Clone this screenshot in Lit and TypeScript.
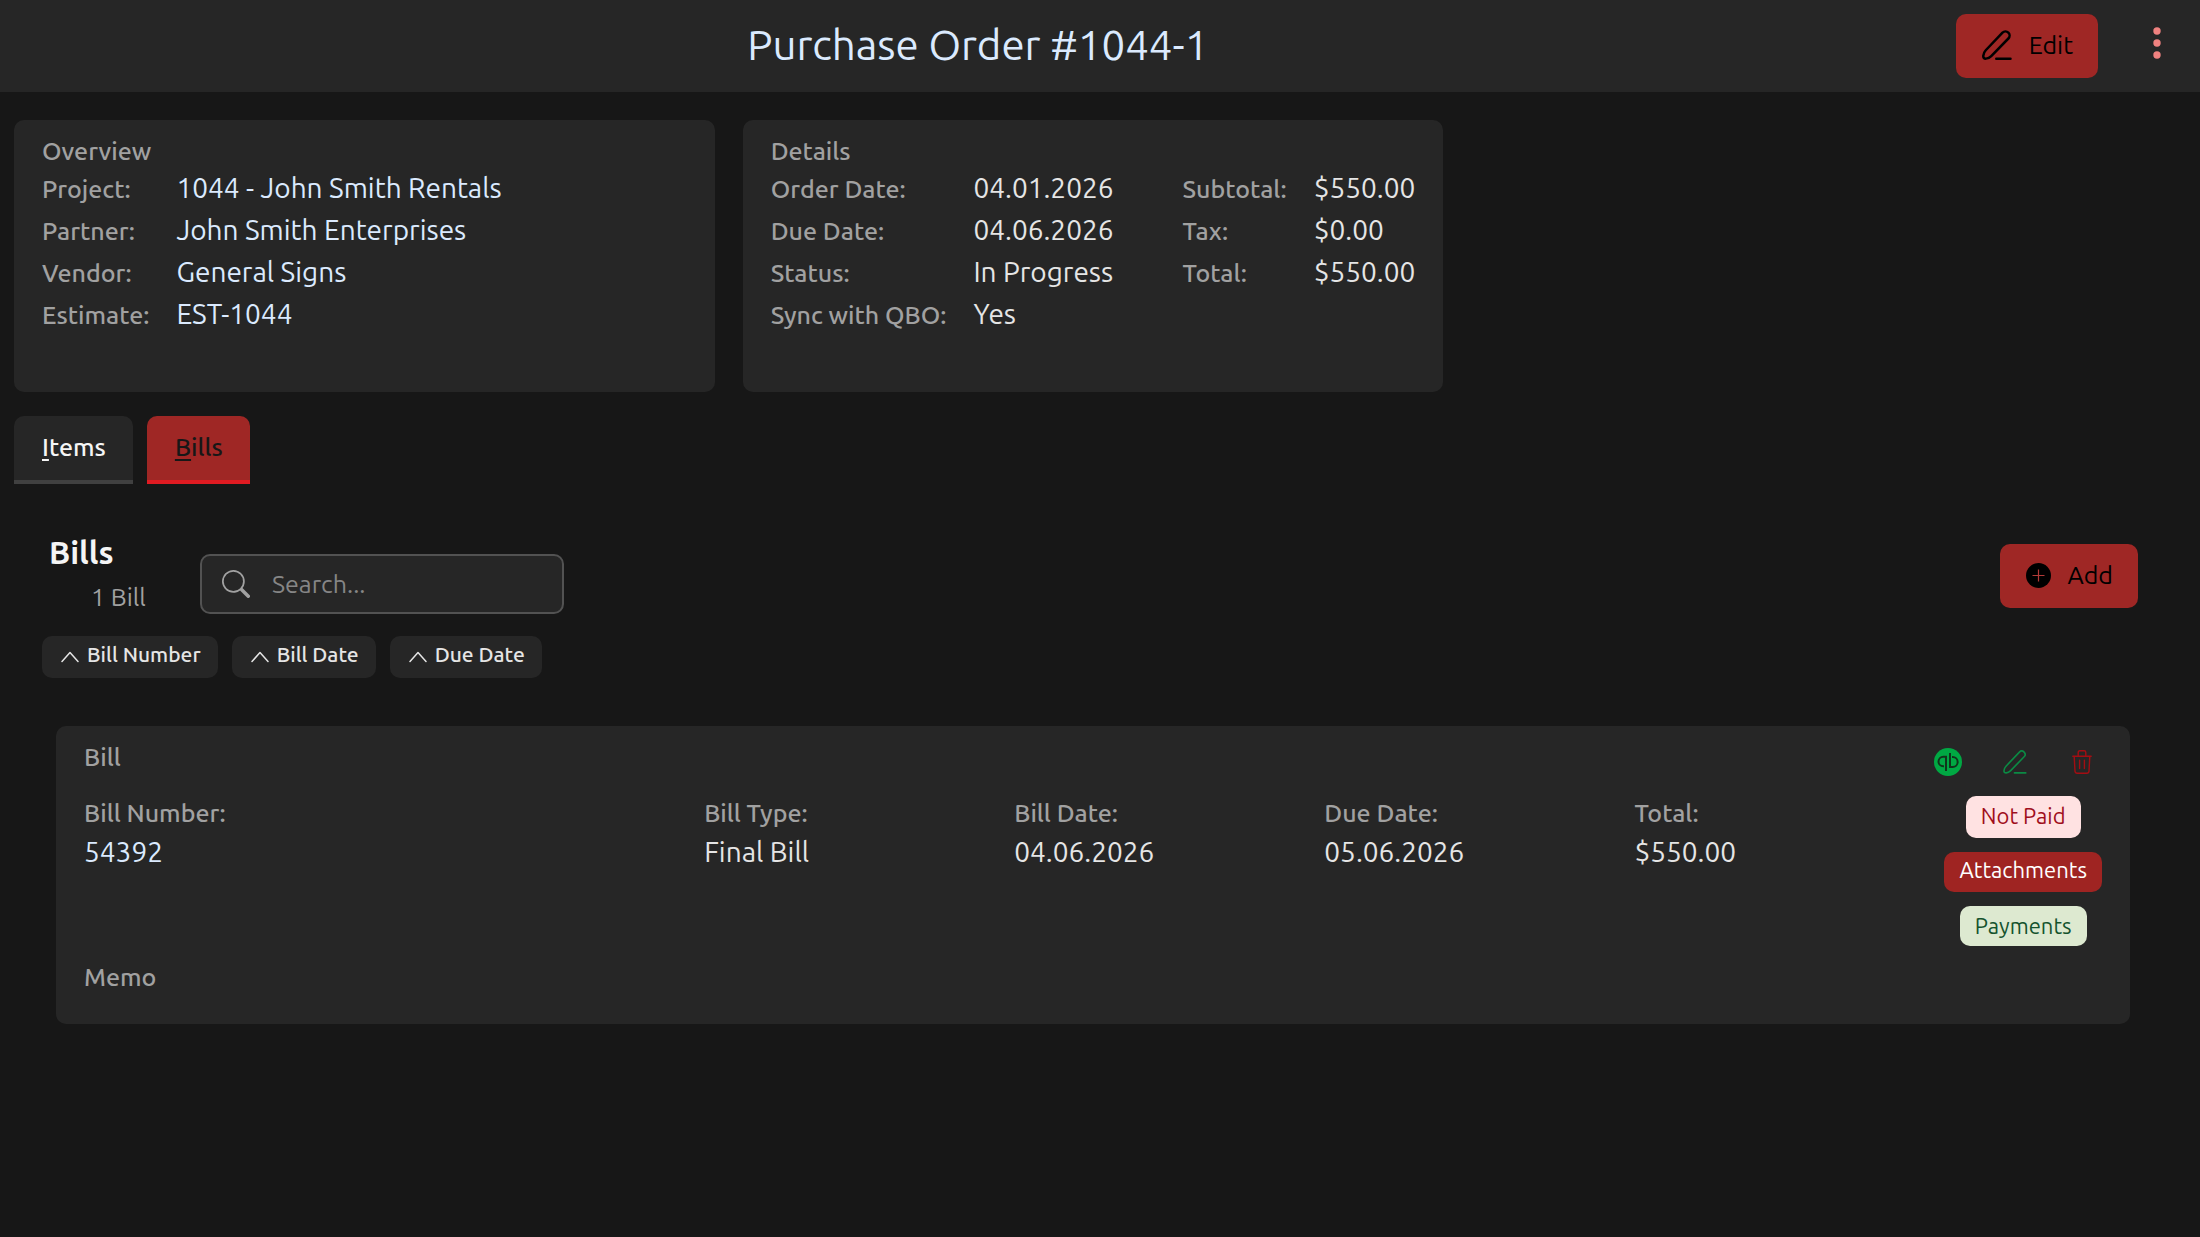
import { LitElement, html, svg, css, nothing } from "lit";
import { customElement, property, state } from "lit/decorators.js";
import { classMap } from "lit/directives/class-map.js";

interface Field {
  label: string;
  value: string;
  href?: string;
}

const pencil = html`<svg class="pencil" viewBox="0 0 24 24" fill="none" stroke="currentColor" stroke-linecap="round" stroke-linejoin="round" aria-hidden="true">
  <path d="M16.4 2.1a3.3 3.3 0 0 1 4.7 4.7L7.4 20.9Q5.5 22.8 3.2 22.9Q.9 23 1 20.7Q1.2 18.1 3 16.2Z" />
  <path d="M11.4 22.9H22.8" />
</svg>`;

const trash = html`<svg class="trash" viewBox="0 0 20 24" fill="none" stroke="currentColor" stroke-linecap="round" stroke-linejoin="round" aria-hidden="true">
  <path d="M.8 6.2H19.2M6.2 6V2.4Q6.2 .8 7.8 .8H12.2Q13.8 .8 13.8 2.4V6M2.2 6.4L3 21.4Q3.1 23.2 4.9 23.2H15.1Q16.9 23.2 17 21.4L17.8 6.4M7.6 10.2V18.6M12.4 10.2V18.6" />
</svg>`;

const quickBooks = html`<svg class="qb" viewBox="0 0 84 84" fill="none" aria-hidden="true">
  <circle cx="42" cy="42" r="42" fill="#00a843" />
  <path d="M36 26H28A14 14 0 0 0 28 55H30M36 23V69" stroke="#10351c" stroke-width="6" />
  <path d="M48 57H56A14 14 0 0 0 56 27H54M48 15V60" stroke="#10351c" stroke-width="6" />
</svg>`;

const plus = html`<svg class="plus" viewBox="0 0 25 25" aria-hidden="true">
  <circle cx="12.5" cy="12.5" r="12.5" fill="#000" />
  <path d="M12.5 6.5V18.5M6.5 12.5H18.5" stroke="#b23a38" stroke-width="1.2" />
</svg>`;

const magnifier = html`<svg class="magnifier" viewBox="0 0 16 16" fill="currentColor" aria-hidden="true">
  <path d="M11.742 10.344a6.5 6.5 0 1 0-1.397 1.398h-.001c.03.04.062.078.098.115l3.85 3.85a1 1 0 0 0 1.415-1.414l-3.85-3.85a1.007 1.007 0 0 0-.115-.1zM12 6.5a5.5 5.5 0 1 1-11 0 5.5 5.5 0 0 1 11 0" />
</svg>`;

const chevron = html`<svg class="chevron" viewBox="0 0 18 12" fill="none" stroke="currentColor" stroke-linecap="round" stroke-linejoin="round" aria-hidden="true">
  <path d="M1 10.5L9 1.5L17 10.5" />
</svg>`;

const dots = html`<svg class="dots" viewBox="0 0 8 38" fill="currentColor" aria-hidden="true">
  ${[4, 16, 28].map((y) => svg`<circle cx="4" cy=${y} r="3.7" />`)}
</svg>`;

@customElement("field-list")
export class FieldList extends LitElement {
  static styles = css`
    dl {
      display: grid;
      grid-template-columns: auto auto;
      justify-content: start;
      align-items: baseline;
      grid-auto-rows: 42px;
      column-gap: 27px;
      margin: 0;
      line-height: 40px;
      white-space: nowrap;
    }
    dt {
      font-size: 25px;
      font-weight: 500;
      color: #a1a1a1;
    }
    dd {
      margin: 0;
      font-size: 28px;
    }
    a {
      color: #dbeafe;
      text-decoration: none;
    }
  `;

  @property({ attribute: false }) fields: Field[] = [];

  render() {
    return html`<dl>
      ${this.fields.map(
        (f) => html`<dt>${f.label}:</dt>
          <dd>${f.href ? html`<a href=${f.href}>${f.value}</a>` : f.value}</dd>`
      )}
    </dl>`;
  }
}

@customElement("app-root")
export class AppRoot extends LitElement {
  static styles = css`
    :host {
      display: block;
      min-height: 100vh;
      background: #171717;
      color: #e5e5e5;
      font-family: Ubuntu, "Noto Sans", sans-serif;
      font-size: 25px;
      font-weight: 400;
    }
    *,
    *::before {
      box-sizing: border-box;
    }
    button,
    input {
      font: inherit;
      color: inherit;
      border: 0;
      margin: 0;
      padding: 0;
      background: none;
    }
    button {
      cursor: pointer;
    }
    svg {
      display: block;
      flex: none;
    }
    h1,
    h2,
    h3,
    p,
    dl,
    dd {
      margin: 0;
      font-weight: inherit;
    }

    .topbar {
      display: flex;
      justify-content: space-between;
      align-items: center;
      padding: 14px 0;
      background: #262626;
    }
    .topbar::before {
      content: "";
    }
    .topbar h1 {
      padding-bottom: 2px;
      font-size: 42px;
      line-height: 60px;
      color: #dbeafe;
    }
    .actions {
      display: flex;
      align-items: center;
      gap: 31px;
      padding-right: 15px;
    }
    .primary {
      display: flex;
      align-items: center;
      gap: 17px;
      height: 64px;
      padding: 0 25px 2px 26px;
      border-radius: 10px;
      background: #9f2725;
      color: #000;
    }
    .primary .pencil {
      width: 30px;
      height: 30px;
      stroke-width: 2;
    }
    .plus {
      width: 25px;
      height: 25px;
    }
    .more {
      display: grid;
      place-items: center;
      width: 56px;
      height: 56px;
      color: #f08280;
    }
    .dots {
      width: 8px;
      height: 38px;
    }

    .summary {
      display: grid;
      grid-template-columns: repeat(3, 1fr);
      gap: 28px;
      padding: 28px 28px 0 14px;
    }
    .panel {
      border-radius: 10px;
      background: #262626;
      padding: 14px 28px 56px;
    }
    .panel h2,
    .bill h3,
    .cells dt {
      font-size: 25px;
      line-height: 34px;
      font-weight: 500;
      color: #a1a1a1;
    }
    .pair {
      display: flex;
      justify-content: space-between;
      gap: 28px;
    }

    .tabs {
      display: flex;
      gap: 14px;
      padding: 24px 14px 0;
    }
    .tab {
      height: 68px;
      padding: 0 27px 6px 28px;
      border-radius: 10px 10px 0 0;
      background: #262626;
      box-shadow: inset 0 -4px #404040;
      font-weight: 500;
      color: #f5f5f5;
    }
    .tab.active {
      background: #9f2725;
      box-shadow: inset 0 -4px #e01b22;
      color: #171717;
    }
    .tab u {
      text-decoration-thickness: 2px;
      text-underline-offset: 3px;
    }

    .bills {
      padding: 50px 62px 0 42px;
    }
    .toolbar {
      display: flex;
      align-items: flex-start;
      padding-left: 7px;
    }
    .heading {
      margin-right: 54px;
    }
    .heading h2 {
      font-size: 32px;
      line-height: 36px;
      font-weight: 600;
      color: #f5f5f5;
    }
    .heading p {
      padding: 6px 0 0 42px;
      line-height: 42px;
      color: #a1a1a1;
    }
    .search {
      display: flex;
      align-items: center;
      gap: 22px;
      width: 364px;
      height: 60px;
      margin-top: 20px;
      padding: 0 20px;
      border: 2px solid #525252;
      border-radius: 10px;
      background: #262626;
    }
    .magnifier {
      width: 28px;
      height: 28px;
      color: #a1a1a1;
    }
    .search input {
      flex: 1;
      min-width: 0;
      outline: none;
    }
    .search input::placeholder {
      color: #868686;
      opacity: 1;
    }
    .add {
      margin: 10px 0 0 auto;
    }

    .sorts {
      display: flex;
      gap: 14px;
      margin-top: 18px;
    }
    .sort {
      display: flex;
      align-items: center;
      gap: 8px;
      height: 42px;
      padding: 0 17px 6px 19px;
      border-radius: 10px;
      background: #262626;
      font-size: 21px;
      font-weight: 500;
    }
    .chevron {
      width: 18px;
      height: 12px;
      margin-top: 6px;
      stroke-width: 1.5;
    }

    .bill {
      margin: 48px 8px 0 14px;
      padding: 14px 28px 30px;
      border-radius: 10px;
      background: #262626;
    }
    .bill-head {
      display: flex;
      justify-content: space-between;
      align-items: flex-start;
    }
    .tools {
      display: flex;
      gap: 27px;
    }
    .tool {
      display: grid;
      place-items: center;
      width: 40px;
      height: 44px;
    }
    .qb {
      width: 28px;
      height: 28px;
    }
    .tool .pencil {
      width: 24px;
      height: 24px;
      color: #0b8a44;
      stroke-width: 1.6;
    }
    .trash {
      width: 20px;
      height: 24px;
      color: #a30d12;
      stroke-width: 1.4;
    }
    .bill-body {
      display: flex;
      gap: 28px;
      margin: 12px 0 14px;
    }
    .cells {
      flex: 1;
      display: grid;
      grid-template-columns: repeat(6, 1fr);
      column-gap: 28px;
    }
    .cell.wide {
      grid-column: span 2;
    }
    .cells dd {
      font-size: 28px;
      line-height: 44px;
    }
    .cells a {
      color: #dbeafe;
      text-decoration: none;
    }
    .badges {
      display: flex;
      flex-direction: column;
      align-items: center;
      gap: 14px;
    }
    .badge {
      padding: 0 15px;
      border-radius: 10px;
      font-size: 22px;
      line-height: 40px;
    }
    .unpaid {
      padding: 0 15px 2px;
      background: #ffe2e2;
      color: #9f0f1c;
    }
    .attachments {
      padding-bottom: 4px;
      line-height: 36px;
      background: #9f2422;
      color: #fff;
    }
    .payments {
      background: #dde9d0;
      color: #14532d;
    }
  `;

  @state() private tab = "Bills";

  private overview: Field[] = [
    { label: "Project", value: "1044 - John Smith Rentals", href: "#project" },
    { label: "Partner", value: "John Smith Enterprises", href: "#partner" },
    { label: "Vendor", value: "General Signs", href: "#vendor" },
    { label: "Estimate", value: "EST-1044", href: "#estimate" },
  ];

  private details: Field[] = [
    { label: "Order Date", value: "04.01.2026" },
    { label: "Due Date", value: "04.06.2026" },
    { label: "Status", value: "In Progress" },
    { label: "Sync with QBO", value: "Yes" },
  ];

  private totals: Field[] = [
    { label: "Subtotal", value: "$550.00" },
    { label: "Tax", value: "$0.00" },
    { label: "Total", value: "$550.00" },
  ];

  private cells: Field[] = [
    { label: "Bill Number", value: "54392", href: "#bill" },
    { label: "Bill Type", value: "Final Bill" },
    { label: "Bill Date", value: "04.06.2026" },
    { label: "Due Date", value: "05.06.2026" },
    { label: "Total", value: "$550.00" },
  ];

  private renderTab(name: string) {
    const active = this.tab === name;
    return html`<button
      type="button"
      role="tab"
      aria-selected=${active}
      class=${classMap({ tab: true, active })}
      @click=${() => (this.tab = name)}
    ><u>${name[0]}</u>${name.slice(1)}</button>`;
  }

  private renderBills() {
    return html`<section class="bills">
      <div class="toolbar">
        <div class="heading">
          <h2>Bills</h2>
          <p>1 Bill</p>
        </div>
        <label class="search">
          ${magnifier}
          <input type="text" aria-label="Search" placeholder="Search..." />
        </label>
        <button type="button" class="primary add">${plus}Add</button>
      </div>
      <div class="sorts">
        ${["Bill Number", "Bill Date", "Due Date"].map(
          (s) => html`<button type="button" class="sort">${chevron}${s}</button>`
        )}
      </div>
      <article class="bill">
        <header class="bill-head">
          <h3>Bill</h3>
          <div class="tools">
            <button type="button" class="tool" aria-label="QuickBooks">${quickBooks}</button>
            <button type="button" class="tool" aria-label="Edit bill">${pencil}</button>
            <button type="button" class="tool" aria-label="Delete bill">${trash}</button>
          </div>
        </header>
        <div class="bill-body">
          <dl class="cells">
            ${this.cells.map(
              (c, i) => html`<div class=${classMap({ cell: true, wide: i === 0 })}>
                <dt>${c.label}:</dt>
                <dd>${c.href ? html`<a href=${c.href}>${c.value}</a>` : c.value}</dd>
              </div>`
            )}
          </dl>
          <div class="badges">
            <span class="badge unpaid">Not Paid</span>
            <button type="button" class="badge attachments">Attachments</button>
            <button type="button" class="badge payments">Payments</button>
          </div>
        </div>
        <h3>Memo</h3>
      </article>
    </section>`;
  }

  render() {
    return html`
      <header class="topbar">
        <h1>Purchase Order #1044-1</h1>
        <div class="actions">
          <button type="button" class="primary">${pencil}Edit</button>
          <button type="button" class="more" aria-label="More actions">${dots}</button>
        </div>
      </header>
      <main>
        <div class="summary">
          <section class="panel">
            <h2>Overview</h2>
            <field-list .fields=${this.overview}></field-list>
          </section>
          <section class="panel">
            <h2>Details</h2>
            <div class="pair">
              <field-list .fields=${this.details}></field-list>
              <field-list .fields=${this.totals}></field-list>
            </div>
          </section>
        </div>
        <div class="tabs" role="tablist">${["Items", "Bills"].map((t) => this.renderTab(t))}</div>
        ${this.tab === "Bills" ? this.renderBills() : nothing}
      </main>
    `;
  }
}
